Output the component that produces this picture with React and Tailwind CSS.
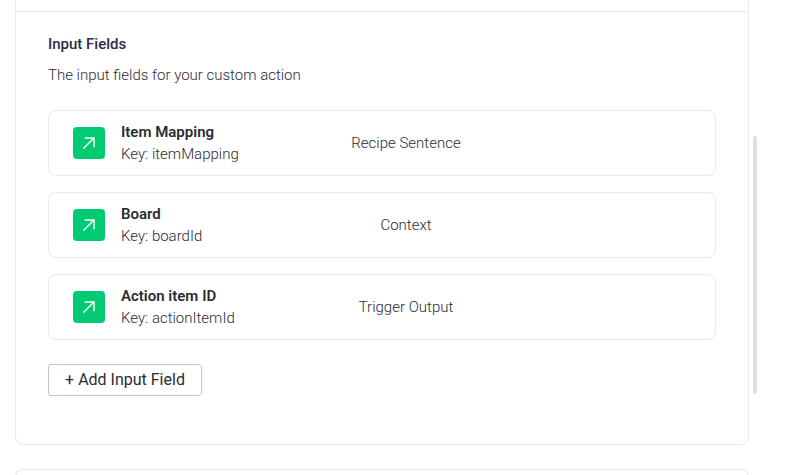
import React from "react";

const FIELDS = [
  { name: "Item Mapping", fieldKey: "itemMapping", source: "Recipe Sentence" },
  { name: "Board", fieldKey: "boardId", source: "Context" },
  { name: "Action item ID", fieldKey: "actionItemId", source: "Trigger Output" },
];

function ArrowIcon() {
  return (
    <div className="grid size-8 shrink-0 place-items-center rounded bg-[#00ca72]">
      <svg width="14" height="14" viewBox="0 0 14 14" fill="none" stroke="white" strokeWidth="1.4" strokeLinecap="round" strokeLinejoin="miter">
        <path d="M1.7 12.2L12 2M3.2 2H12.1V10.8" />
      </svg>
    </div>
  );
}

function FieldRow({ field }) {
  return (
    <div className="flex h-[66px] items-center rounded-lg border border-[#e7e8f0] pl-6">
      <ArrowIcon />
      <div className="ml-4 w-[200px] leading-[22px]">
        <div className="font-semibold">{field.name}</div>
        <div className="font-light">Key: {field.fieldKey}</div>
      </div>
      <div className="w-[170px] text-center font-light">{field.source}</div>
    </div>
  );
}

export default function App() {
  return (
    <div className="flex h-[475px] overflow-hidden bg-white font-['Roboto',sans-serif] text-[15px] text-[#2b2c33]">
      <div className="ml-[15px] flex w-[734px] shrink-0 flex-col">
        <div className="h-[445px] shrink-0 rounded-b-lg border border-t-0 border-[#e7e8f0]">
          <div className="h-3 border-b border-[#e7e8f0]" />
          <div className="px-8 pt-[21px]">
            <h2 className="leading-[22px] font-medium text-[#2b2c3d]">Input Fields</h2>
            <p className="mt-[9px] leading-[22px] font-light">The input fields for your custom action</p>
            <div className="mt-6 flex flex-col gap-4">
              {FIELDS.map((field) => (
                <FieldRow key={field.fieldKey} field={field} />
              ))}
            </div>
            <button className="mt-6 h-8 w-[154px] rounded-[3px] border border-[#c3c4d0] text-base">+ Add Input Field</button>
          </div>
        </div>
        <div className="mt-6 h-10 shrink-0 rounded-t-lg border border-b-0 border-[#e7e8f0]" />
      </div>
      {/* scrollbar thumb */}
      <div className="mt-[136px] ml-1 h-[258px] w-1 rounded-full bg-[#dfdfdf]" />
    </div>
  );
}
